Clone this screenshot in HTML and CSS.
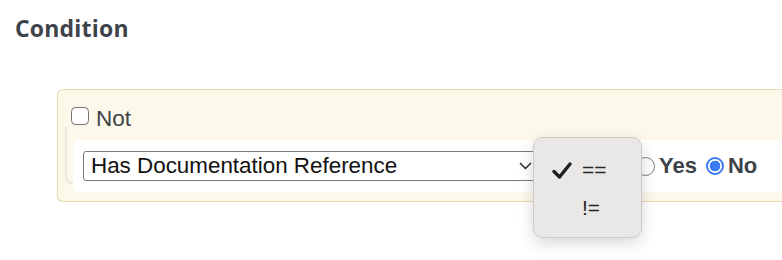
FILE: index.html
```html
<!DOCTYPE html>
<html>
<head>
<meta charset="utf-8">
<link rel="stylesheet" href="styles.css">
</head>
<body>
<h2 class="title">Condition</h2>
<div class="box">
  <label class="not-row"><span class="checkbox"></span><span class="not-label">Not</span></label>
  <div class="group">
    <div class="row">
      <div class="select">
        <span class="select-text">Has Documentation Reference</span>
        <svg class="chevron" width="13" height="8" viewBox="0 0 13 8"><path d="M1 1 L6.5 6.5 L12 1" fill="none" stroke="#222" stroke-width="1.4"/></svg>
      </div>
      <div class="op-select">==</div>
      <label class="radio-item"><span class="radio"></span><span class="radio-label">Yes</span></label>
      <label class="radio-item"><span class="radio checked"></span><span class="radio-label">No</span></label>
    </div>
  </div>
</div>
<div class="popup">
  <div class="opt">
    <svg class="check" width="20" height="17" viewBox="0 0 20 17"><path d="M2 9.5 L7.5 15 L18 2" fill="none" stroke="#1f1f1f" stroke-width="3.4" stroke-linecap="round" stroke-linejoin="round"/></svg>
    <span class="opt-text">==</span>
  </div>
  <div class="opt">
    <span class="check-space"></span>
    <span class="opt-text">!=</span>
  </div>
</div>
</body>
</html>
```
FILE: styles.css
```css
html, body {
  margin: 0;
  padding: 0;
  background: #ffffff;
  overflow: hidden;
  width: 782px;
  height: 260px;
}
body {
  font-family: "Liberation Sans", Arial, sans-serif;
  color: #3e434a;
  position: relative;
}
.title {
  font-family: "Open Sans", "Liberation Sans", sans-serif;
  font-weight: 700;
  font-size: 23px;
  line-height: 30px;
  margin: 0;
  padding: 13px 0 0 15px;
  color: #3e434a;
  letter-spacing: 0.2px;
}
.box {
  margin: 46px 0 0 57px;
  width: 725px;
  box-sizing: border-box;
  background: #fcf8ea;
  border: 1px solid #e6daae;
  border-right: none;
  border-radius: 6px 0 0 6px;
  padding: 15px 0 9px 7px;
  display: flex;
  flex-direction: column;
}
.not-row {
  display: flex;
  align-items: center;
  gap: 7px;
  padding-left: 6px;
  height: 22px;
}
.checkbox {
  width: 16px;
  height: 16px;
  border: 1.5px solid #717171;
  border-radius: 4.5px;
  background: #fff;
}
.not-label {
  font-size: 22.5px;
  line-height: 22px;
  color: #3e434a;
  position: relative;
  top: 3px;
}
.group {
  position: relative;
  padding: 13px 0 0 8px;
}
.group::before {
  content: "";
  position: absolute;
  left: 0;
  top: 0;
  bottom: 8px;
  width: 12px;
  border-left: 2px solid #ece7d6;
  border-bottom: 2px solid #ece7d6;
  border-bottom-left-radius: 7px;
}
.row {
  position: relative;
  background: #ffffff;
  border-radius: 6px 0 0 6px;
  height: 52px;
  display: flex;
  align-items: center;
  padding-left: 10px;
}
.select {
  width: 458px;
  height: 30px;
  box-sizing: border-box;
  border: 1px solid #7a7a7a;
  border-radius: 3px;
  background: #fff;
  display: flex;
  align-items: center;
  padding-left: 7px;
  padding-right: 8px;
}
.select-text {
  flex: 1;
  font-size: 22.4px;
  color: #111;
  white-space: nowrap;
}
.op-select {
  width: 80px;
  height: 30px;
  box-sizing: border-box;
  margin-left: 6px;
  border: 1px solid #7a7a7a;
  border-radius: 3px;
  font-size: 20px;
  line-height: 28px;
  padding-left: 8px;
}
.radio-item {
  display: flex;
  align-items: center;
  gap: 4px;
  margin-left: 9px;
}
.radio-item + .radio-item {
  margin-left: 9px;
}
.radio {
  width: 17px;
  height: 17px;
  border: 1px solid #7b7b7b;
  border-radius: 50%;
  background: #fff;
}
.radio.checked {
  width: 14px;
  height: 14px;
  border: 2.5px solid #3a7bf2;
  background: radial-gradient(circle, #3a7bf2 0 5px, #fff 5.6px);
}
.radio-label {
  font-weight: 700;
  font-size: 22px;
  color: #3e434a;
}
.popup {
  position: absolute;
  left: 533px;
  top: 137px;
  width: 109px;
  height: 101px;
  box-sizing: border-box;
  background: #e9e8e6;
  border: 1px solid #cdcbc8;
  border-radius: 10px;
  box-shadow: 0 5px 16px rgba(0, 0, 0, 0.16);
  padding-top: 13px;
  display: flex;
  flex-direction: column;
}
.opt {
  display: flex;
  align-items: center;
  height: 38px;
  padding-left: 18px;
  gap: 10px;
}
.check, .check-space {
  width: 20px;
  height: 17px;
  flex: none;
}
.opt-text {
  font-size: 21px;
  color: #262626;
  font-family: "Liberation Sans", Arial, sans-serif;
}
```
